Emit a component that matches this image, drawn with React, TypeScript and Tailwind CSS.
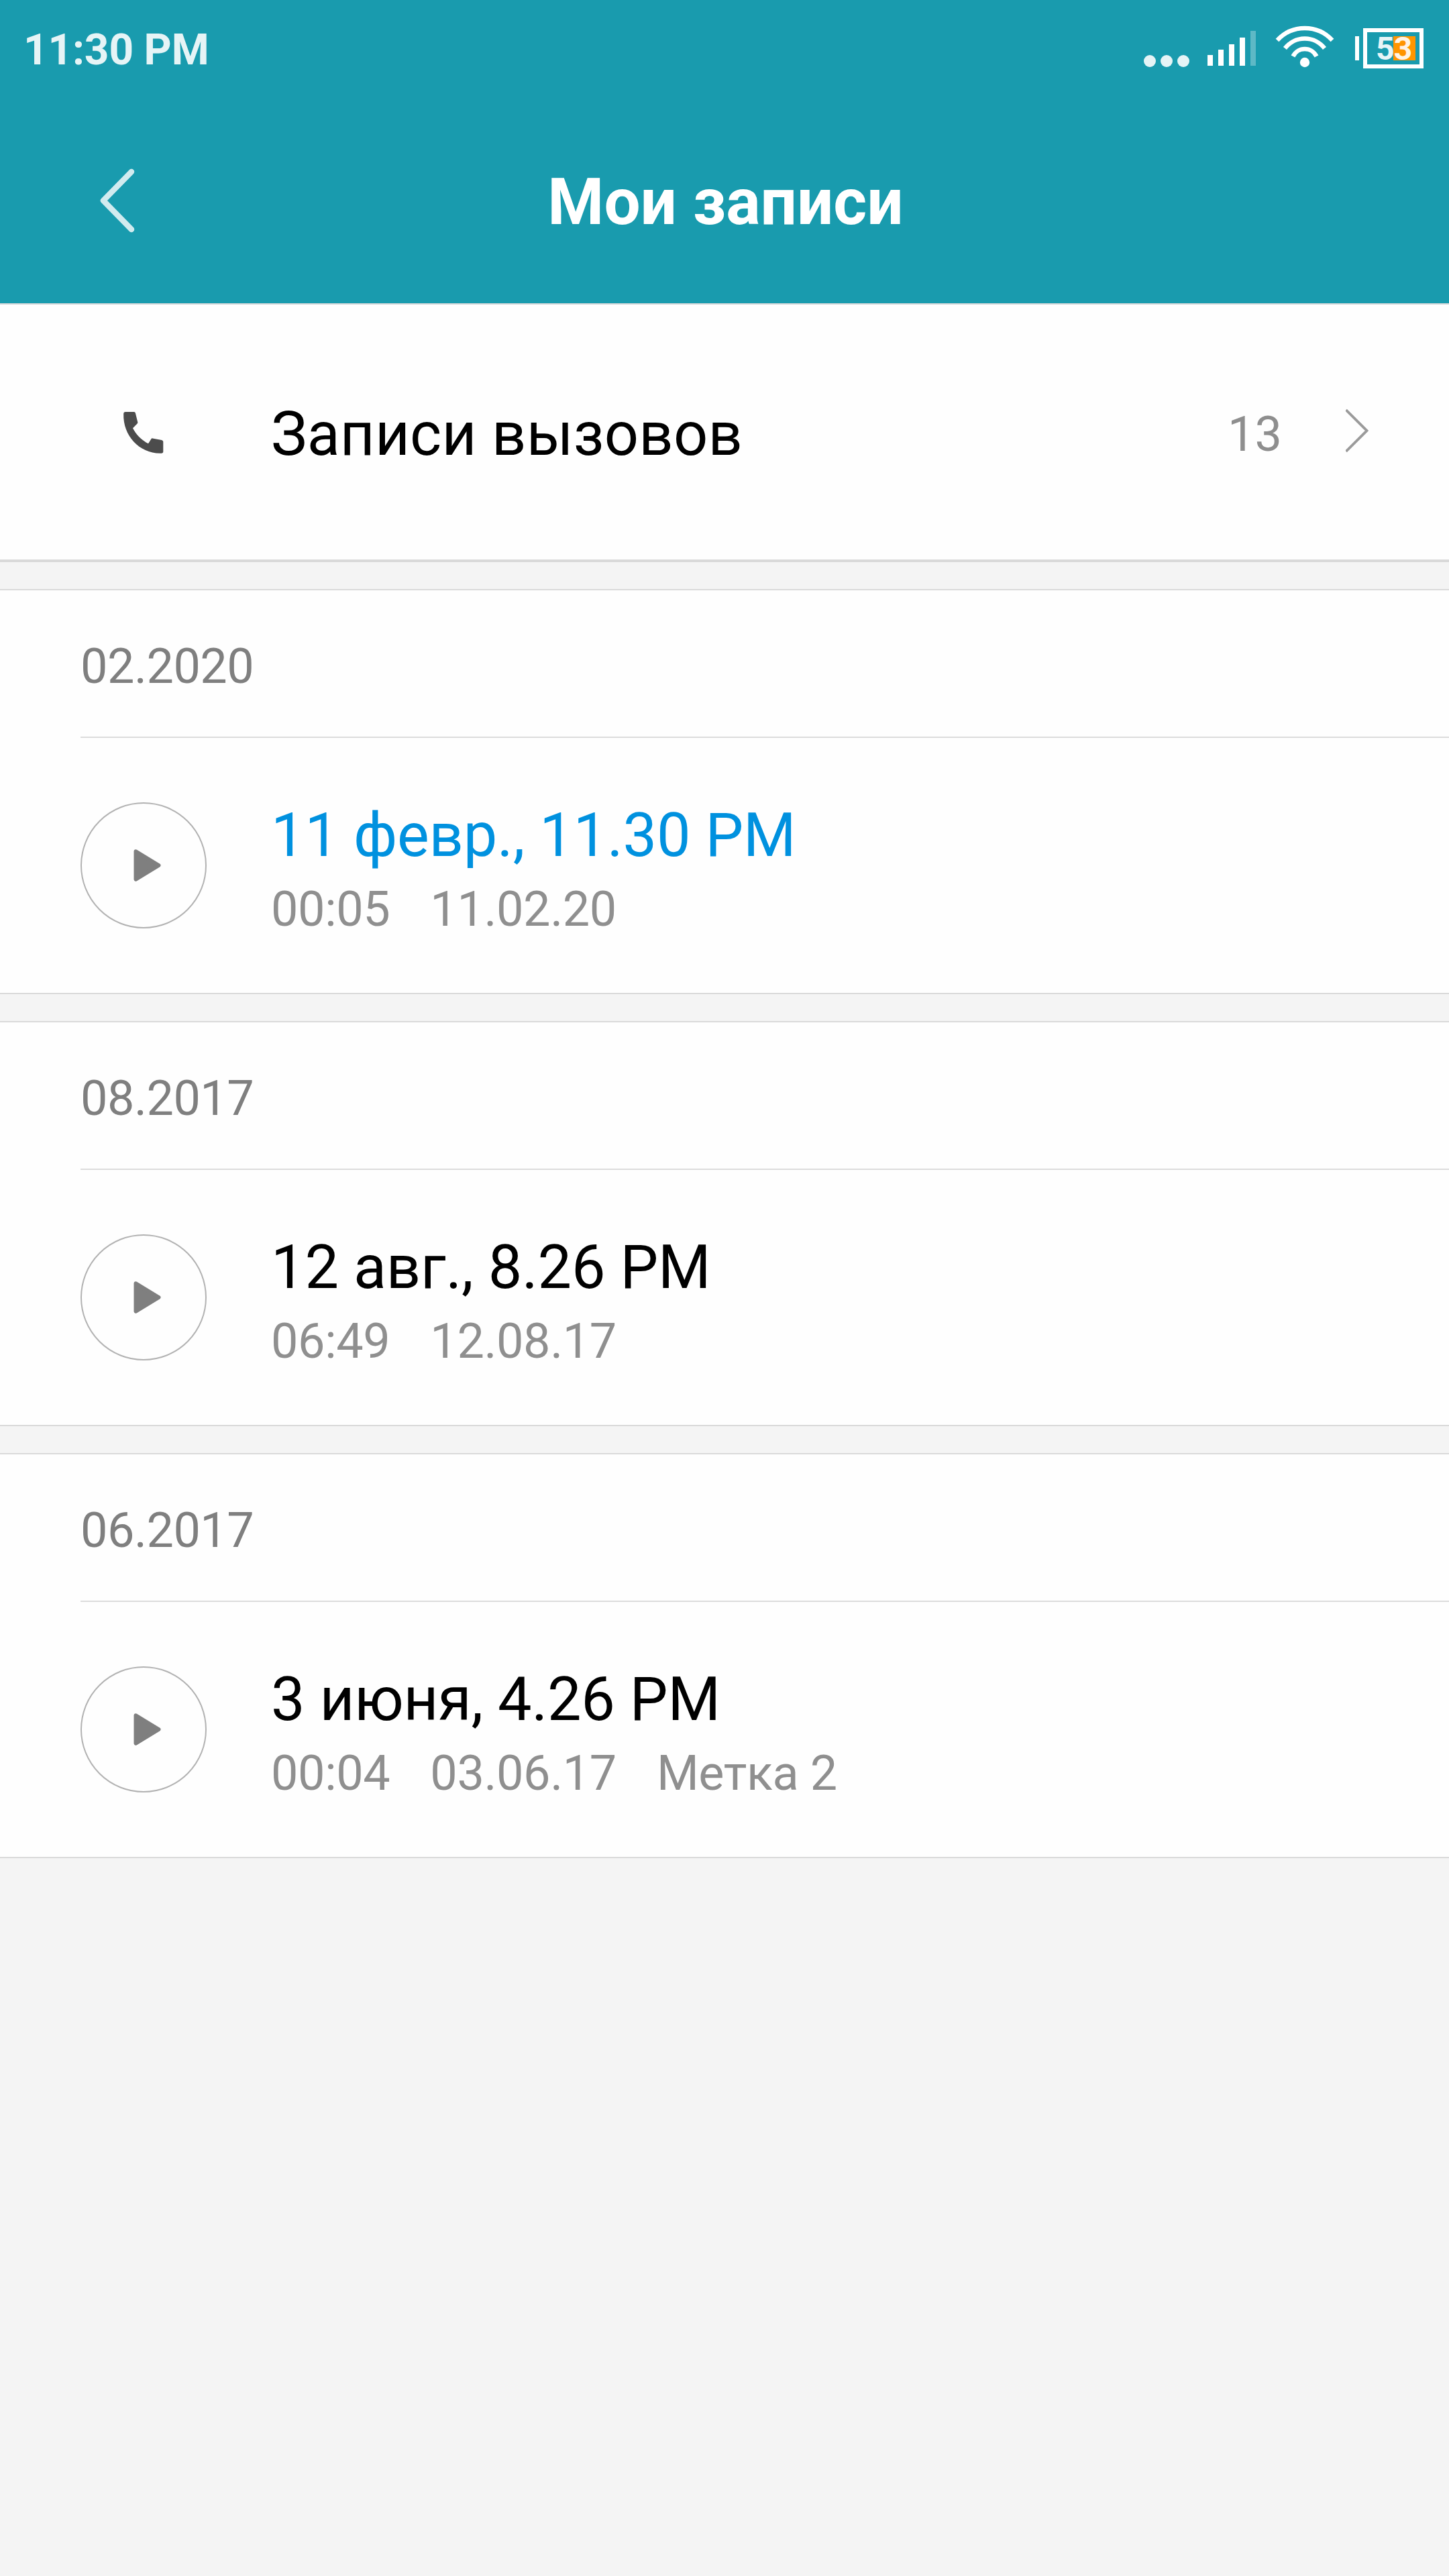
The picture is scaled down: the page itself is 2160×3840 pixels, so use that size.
type Recording = {
  month: string;
  title: string;
  details: string[];
  isNew?: boolean;
};

const recordings: Recording[] = [
  { month: "02.2020", title: "11 февр., 11.30 PM", details: ["00:05", "11.02.20"], isNew: true },
  { month: "08.2017", title: "12 авг., 8.26 PM", details: ["06:49", "12.08.17"] },
  { month: "06.2017", title: "3 июня, 4.26 PM", details: ["00:04", "03.06.17", "Метка 2"] },
];

function SignalIcon() {
  return (
    <svg className="block h-[52px] w-[72px]" viewBox="0 0 72 52" fill="#fff">
      <rect x="0" y="36" width="8" height="16" />
      <rect x="16" y="28" width="8" height="24" />
      <rect x="32" y="20" width="8" height="32" />
      <rect x="48" y="10" width="8" height="42" />
      <rect x="64" y="0" width="8" height="52" opacity="0.3" />
    </svg>
  );
}

function WifiIcon() {
  return (
    <svg className="block h-[64px] w-[90px]" viewBox="220 17 90 64" fill="none" stroke="#fff" strokeWidth="6.4">
      <path d="M224 40A55.7 55.7 0 0 1 306 40" />
      <path d="M235.5 52A37.2 37.2 0 0 1 294.5 52" />
      <path d="M247.5 64A19.4 19.4 0 0 1 282.5 64" />
      <circle cx="265" cy="73" r="7.2" fill="#fff" stroke="none" />
    </svg>
  );
}

function Battery() {
  return (
    <div className="flex items-center gap-[6px]">
      <div className="h-[36px] w-[6px] bg-white" />
      <div className="relative h-[60px] w-[90px] border-[6px] border-white">
        <div className="absolute top-[6px] right-[6px] h-[36px] w-[33px] bg-[#ff9500]" />
        <span className="absolute top-[-2px] left-[13px] text-[48px] leading-[54px] font-bold tracking-[-0.8px] text-white/90">
          53
        </span>
      </div>
    </div>
  );
}

function StatusBar() {
  return (
    <div className="flex h-[140px] items-start justify-between pl-[35px] pr-[38px]">
      <span className="mt-[37px] text-[64px] leading-[75px] font-bold tracking-[-0.2px] text-[#e6f4f6]">11:30 PM</span>
      <div className="flex items-start">
        <div className="mt-[82px] mr-[27px] flex gap-[7px]">
          <div className="size-[18px] rounded-full bg-[#e5f4f6]" />
          <div className="size-[18px] rounded-full bg-[#e5f4f6]" />
          <div className="size-[18px] rounded-full bg-[#e5f4f6]" />
        </div>
        <div className="mt-[46px] mr-[28px]">
          <SignalIcon />
        </div>
        <div className="mt-[37px] mr-[30px]">
          <WifiIcon />
        </div>
        <div className="mt-[42px]">
          <Battery />
        </div>
      </div>
    </div>
  );
}

function Header() {
  return (
    <header className="h-[452px] bg-[#199bae]">
      <StatusBar />
      <div className="grid h-[312px] grid-cols-[1fr_auto_1fr] items-start">
        <svg
          className="mt-[110px] ml-[146px] block h-[98px] w-[58px]"
          viewBox="146 250 58 98"
          fill="none"
          stroke="#d1ebef"
          strokeWidth="8.5"
          strokeLinecap="round"
          strokeLinejoin="round"
        >
          <path d="M196 256L154 299L196 342" />
        </svg>
        <h1 className="mt-[105px] pl-[3px] text-[96px] leading-[112px] font-bold text-white">Мои записи</h1>
      </div>
    </header>
  );
}

function PhoneIcon() {
  return (
    <svg className="block size-[90px]" viewBox="0 0 90 90" fill="#4c4c4c">
      <path d="M17 14H29.8Q31.6 14 31.9 15.8L35.3 29.6Q35.5 30.8 34.6 31.6L28 38.3C33 48 41 56.300 51 61.200L55.300 54.400Q56 53.200 57.400 53.400L71 56Q73.300 56.500 73.300 58.600V73Q73.300 75.700 70.600 75.700C39 77 13 50 14.200 17Q14.200 14 17 14Z" />
    </svg>
  );
}

function CallRecordings() {
  return (
    <div className="flex h-[386px] items-start border-t-2 border-b-4 border-t-[#d2d6d8] border-b-[#d9d9d9] bg-[#fefefe] pl-[170px] pr-[120px]">
      <div className="mt-[146px] w-[234px]">
        <PhoneIcon />
      </div>
      <span className="mt-[141px] flex-1 text-[90px] leading-[105px] tracking-[0.2px] text-black">Записи вызовов</span>
      <span className="mt-[151px] mr-[95px] text-[72px] leading-[85px] text-[#8e8e8e]">13</span>
      <svg
        className="mt-[155px] block h-[66px] w-[34px]"
        viewBox="0 0 34 66"
        fill="none"
        stroke="#9a9a9a"
        strokeWidth="3.8"
      >
        <path d="M0.500 2L31.500 33L0.500 64" />
      </svg>
    </div>
  );
}

function PlayButton() {
  return (
    <div className="flex size-[188px] items-center justify-center rounded-full border-[2.5px] border-[#b2b2b2]">
      <svg
        className="ml-[11px] block h-[50px] w-[44px]"
        viewBox="0 0 44 50"
        fill="#7f7f7f"
        stroke="#7f7f7f"
        strokeWidth="6"
        strokeLinejoin="round"
      >
        <path d="M4.500 4.300L38.500 25L4.500 45.700Z" />
      </svg>
    </div>
  );
}

function RecordingSection({ item }: { item: Recording }) {
  return (
    <section className="border-y-2 border-[#dadada] bg-[#fefefe]">
      <div className="ml-[120px] h-[220px] border-b-2 border-[#dcdcdc] pt-[71px] text-[72px] leading-[85px] tracking-[-0.5px] text-[#7f7f7f]">
        {item.month}
      </div>
      <div className="flex h-[380px] items-start pl-[120px]">
        <div className="mt-[96px] mr-[96px]">
          <PlayButton />
        </div>
        <div className="mt-[93px] flex flex-col gap-[15px]">
          <span
            className={
              item.isNew
                ? "text-[90px] leading-[105px] tracking-[-0.2px] text-[#0091df]"
                : "text-[90px] leading-[105px] tracking-[-0.2px] text-black"
            }
          >
            {item.title}
          </span>
          <div className="flex gap-[60px] text-[72px] leading-[85px] tracking-[-0.4px] text-[#8f8f8f]">
            {item.details.map((detail) => (
              <span key={detail}>{detail}</span>
            ))}
          </div>
        </div>
      </div>
    </section>
  );
}

export default function App() {
  return (
    <div className="h-[3840px] w-[2160px] overflow-hidden bg-[#f4f4f4] font-[Roboto,sans-serif] whitespace-nowrap">
      <Header />
      <main className="flex flex-col gap-[40px]">
        <CallRecordings />
        {recordings.map((item) => (
          <RecordingSection key={item.month} item={item} />
        ))}
      </main>
    </div>
  );
}
